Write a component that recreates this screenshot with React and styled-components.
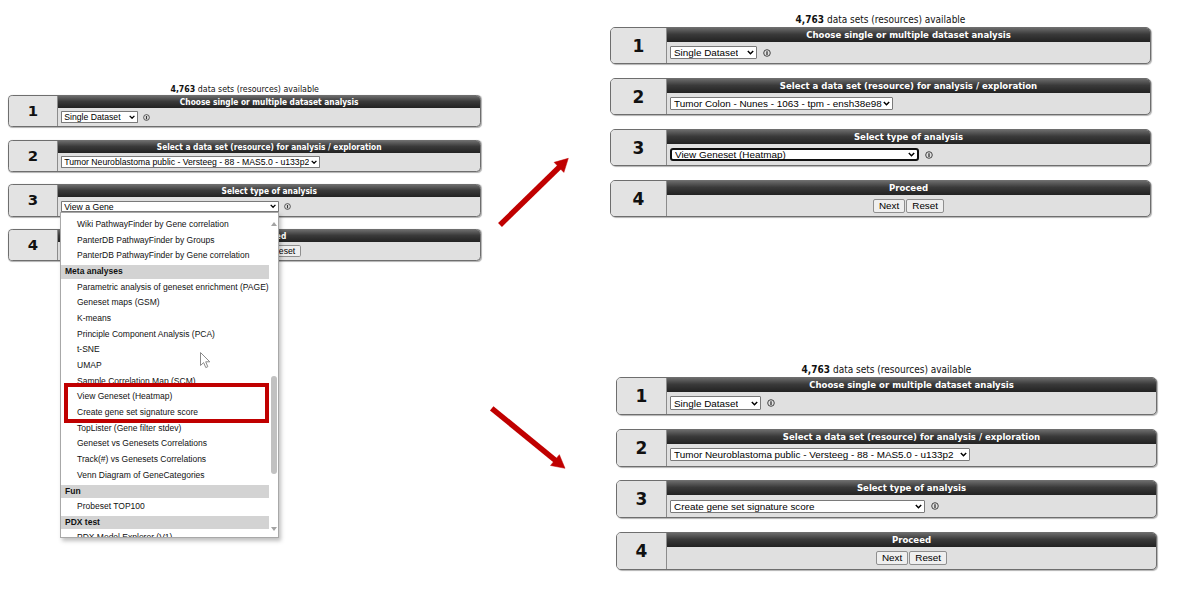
import React from 'react'
import styled, { createGlobalStyle } from 'styled-components'

const GlobalStyle = createGlobalStyle`
  html, body {
    margin: 0;
    padding: 0;
    background: #fff;
  }
  body {
    font-family: "DejaVu Sans Condensed", "DejaVu Sans", sans-serif;
  }
`

const Canvas = styled.div`
  position: relative;
  width: 1188px;
  height: 596px;
  overflow: hidden;
  background: #fff;
`

// each screenshot sits on the free canvas at its own spot
const Shot = styled.div`
  position: absolute;
  left: ${p => p.x}px;
  top: ${p => p.y}px;
`

const Form = styled.div`
  zoom: ${p => p.scale};
  width: 541px;
`

const Count = styled.div`
  font-size: 10px;
  line-height: 12px;
  text-align: center;
  color: #111;
  margin-bottom: 1px;
  b {
    font-weight: bold;
  }
`

const Steps = styled.div`
  display: flex;
  flex-direction: column;
  gap: ${p => p.gap}px;
`

const Step = styled.div`
  display: flex;
  height: ${p => p.h}px;
  box-sizing: border-box;
  border: 1px solid #6e6e6e;
  border-radius: 5px;
  overflow: hidden;
  background: #e0e0e0;
  box-shadow: 1px 1px 1px rgba(0, 0, 0, 0.3);
`

const StepNum = styled.div`
  flex: none;
  width: ${p => p.w}px;
  box-sizing: border-box;
  border-right: 1px solid #8c8c8c;
  display: flex;
  align-items: center;
  justify-content: center;
  font-family: "DejaVu Sans", sans-serif;
  font-weight: bold;
  font-size: 17px;
  color: #111;
  background: #e3e3e3;
`

const StepMain = styled.div`
  flex: 1;
  display: flex;
  flex-direction: column;
`

const StepHead = styled.div`
  flex: none;
  height: 14px;
  line-height: 14px;
  text-align: center;
  color: #fff;
  font-weight: bold;
  font-size: 9.5px;
  background: linear-gradient(#6a6a6a, #3a3a3a 45%, #222);
`

const StepBody = styled.div`
  flex: 1;
  display: flex;
  align-items: center;
  justify-content: ${p => (p.center ? 'center' : 'flex-start')};
  gap: 6px;
  padding: 0 3px;
`

const Select = styled.div`
  display: inline-flex;
  align-items: center;
  justify-content: space-between;
  box-sizing: border-box;
  width: ${p => p.w}px;
  height: 13.5px;
  padding: 0 2px 0 3px;
  background: #fff;
  border: ${p => (p.focused ? '2px solid #111' : '1px solid #7a7a7a')};
  border-radius: ${p => (p.focused ? '3px' : '1px')};
  font-family: "Liberation Sans", Arial, sans-serif;
  font-size: 9.9px;
  color: #000;
  white-space: nowrap;
  span {
    overflow: hidden;
  }
`

const Buttons = styled.div`
  display: flex;
  gap: 1px;
`

const Button = styled.button`
  height: 14px;
  padding: 0 5px;
  box-sizing: border-box;
  font-family: "Liberation Sans", Arial, sans-serif;
  font-size: 9.9px;
  line-height: 12px;
  color: #000;
  background: #efefef;
  border: 1px solid #8f8f8f;
  border-radius: 2px;
`

const Dropdown = styled.div`
  position: absolute;
  left: 52px;
  top: 128.4px;
  width: 219px;
  height: 326px;
  box-sizing: border-box;
  display: flex;
  overflow: hidden;
  background: #fff;
  border: 1px solid #a8a8a8;
  box-shadow: 2px 3px 4px rgba(0, 0, 0, 0.25);
  font-family: "Liberation Sans", Arial, sans-serif;
  font-size: 8.5px;
  color: #111;
`

const Options = styled.div`
  flex: 1;
  padding-top: 4.2px;
`

const Option = styled.div`
  height: 15.67px;
  line-height: 15.67px;
  padding-left: 16px;
  white-space: nowrap;
`

const Group = styled.div`
  height: 15.67px;
  box-sizing: border-box;
  padding: 1.3px 0;
  line-height: 13px;
  background: #d3d3d3;
  background-clip: content-box;
  font-weight: bold;
  text-indent: 4px;
  white-space: nowrap;
`

const Scrollbar = styled.div`
  flex: none;
  width: 10px;
  position: relative;
  background: #fff;
`

const Thumb = styled.div`
  position: absolute;
  left: 2px;
  top: 163px;
  width: 6px;
  height: 98px;
  border-radius: 3px;
  background: #c1c1c1;
`

const ScrollArrow = styled.div`
  position: absolute;
  left: 2px;
  ${p => (p.down ? 'bottom: 6px;' : 'top: 9px;')}
  width: 0;
  height: 0;
  border-left: 3px solid transparent;
  border-right: 3px solid transparent;
  ${p => (p.down ? 'border-top: 4px solid #a3a3a3;' : 'border-bottom: 4px solid #a3a3a3;')}
`

const Highlight = styled.div`
  position: absolute;
  left: 3px;
  top: 170px;
  width: 205px;
  height: 40px;
  box-sizing: border-box;
  border: 4px solid #c00000;
`

const Cursor = styled.svg`
  position: absolute;
  left: 192px;
  top: 268.4px;
`

const Overlay = styled.svg`
  position: absolute;
  left: 0;
  top: 0;
  pointer-events: none;
`

function Chevron() {
  return (
    <svg width="7" height="5" viewBox="0 0 7 5">
      <path d="M0.8 1 L3.5 3.7 L6.2 1" fill="none" stroke="#000" strokeWidth="1.5" />
    </svg>
  )
}

function Info() {
  return (
    <svg width="8" height="8" viewBox="0 0 8 8">
      <circle cx="4" cy="4" r="3.3" fill="none" stroke="#333" strokeWidth="0.9" />
      <path d="M4 2.2 V5.9" stroke="#333" strokeWidth="1.3" />
    </svg>
  )
}

function Arrow({ x1, y1, x2, y2 }) {
  const len = Math.hypot(x2 - x1, y2 - y1)
  const ux = (x2 - x1) / len
  const uy = (y2 - y1) / len
  const bx = x2 - ux * 13
  const by = y2 - uy * 13
  const head = [
    [x2, y2],
    [bx - uy * 7, by + ux * 7],
    [bx + uy * 7, by - ux * 7],
  ]
    .map(p => p.join(','))
    .join(' ')
  return (
    <g fill="#c00000" stroke="#c00000">
      <line x1={x1} y1={y1} x2={bx + ux} y2={by + uy} strokeWidth="5.5" />
      <polygon points={head} strokeWidth="0.5" />
    </g>
  )
}

const metaItems = [
  { label: 'Wiki PathwayFinder by Gene correlation' },
  { label: 'PanterDB PathwayFinder by Groups' },
  { label: 'PanterDB PathwayFinder by Gene correlation' },
  { label: 'Meta analyses', group: true },
  { label: 'Parametric analysis of geneset enrichment (PAGE)' },
  { label: 'Geneset maps (GSM)' },
  { label: 'K-means' },
  { label: 'Principle Component Analysis (PCA)' },
  { label: 't-SNE' },
  { label: 'UMAP' },
  { label: 'Sample Correlation Map (SCM)' },
  { label: 'View Geneset (Heatmap)' },
  { label: 'Create gene set signature score' },
  { label: 'TopLister (Gene filter stdev)' },
  { label: 'Geneset vs Genesets Correlations' },
  { label: 'Track(#) vs Genesets Correlations' },
  { label: 'Venn Diagram of GeneCategories' },
  { label: 'Fun', group: true },
  { label: 'Probeset TOP100' },
  { label: 'PDX test', group: true },
  { label: 'PDX Model Explorer (V1)' },
]

function StepForm({ x, y, scale = 1, gap = 14, stepH = 37, numW = 56, choices, children }) {
  const titles = [
    'Choose single or multiple dataset analysis',
    'Select a data set (resource) for analysis / exploration',
    'Select type of analysis',
  ]
  return (
    <Shot x={x} y={y}>
      <Form scale={scale}>
        <Count>
          <b>4,763</b> data sets (resources) available
        </Count>
        <Steps gap={gap}>
          {choices.map((c, i) => (
            <Step key={i} h={stepH}>
              <StepNum w={numW}>{i + 1}</StepNum>
              <StepMain>
                <StepHead>{titles[i]}</StepHead>
                <StepBody>
                  <Select w={c.w} focused={c.focused}>
                    <span>{c.text}</span>
                    <Chevron />
                  </Select>
                  {i !== 1 && <Info />}
                </StepBody>
              </StepMain>
            </Step>
          ))}
          <Step h={stepH}>
            <StepNum w={numW}>4</StepNum>
            <StepMain>
              <StepHead>Proceed</StepHead>
              <StepBody center>
                <Buttons>
                  <Button>Next</Button>
                  <Button>Reset</Button>
                </Buttons>
              </StepBody>
            </StepMain>
          </Step>
        </Steps>
      </Form>
      {children}
    </Shot>
  )
}

export default function App() {
  return (
    <Canvas>
      <GlobalStyle />
      <StepForm
        x={8}
        y={83.6}
        scale={0.875}
        choices={[
          { text: 'Single Dataset', w: 88 },
          { text: 'Tumor Neuroblastoma public - Versteeg - 88 - MAS5.0 - u133p2', w: 296 },
          { text: 'View a Gene', w: 249 },
        ]}
      >
        <Dropdown>
          <Options>
            {metaItems.map((it, i) =>
              it.group ? <Group key={i}>{it.label}</Group> : <Option key={i}>{it.label}</Option>
            )}
          </Options>
          <Scrollbar>
            <ScrollArrow />
            <Thumb />
            <ScrollArrow down />
          </Scrollbar>
          <Highlight />
        </Dropdown>
        <Cursor width="11" height="17" viewBox="0 0 11 17">
          <path
            d="M0.5 0.5 L0.5 13.5 L3.6 10.6 L5.8 15.6 L7.8 14.7 L5.7 9.8 L9.8 9.8 Z"
            fill="#fff"
            stroke="#8a8a8a"
            strokeWidth="1"
          />
        </Cursor>
      </StepForm>

      <StepForm
        x={610}
        y={14}
        choices={[
          { text: 'Single Dataset', w: 87 },
          { text: 'Tumor Colon - Nunes - 1063 - tpm - ensh38e98', w: 223 },
          { text: 'View Geneset (Heatmap)', w: 249, focused: true },
        ]}
      />

      <StepForm
        x={616}
        y={364}
        stepH={38}
        gap={13.67}
        numW={50}
        choices={[
          { text: 'Single Dataset', w: 91 },
          { text: 'Tumor Neuroblastoma public - Versteeg - 88 - MAS5.0 - u133p2', w: 300 },
          { text: 'Create gene set signature score', w: 255 },
        ]}
      />

      <Overlay width="1188" height="596">
        <Arrow x1={500} y1={225} x2={568.3} y2={158.3} />
        <Arrow x1={491.7} y1={408.3} x2={565} y2={468.3} />
      </Overlay>
    </Canvas>
  )
}
